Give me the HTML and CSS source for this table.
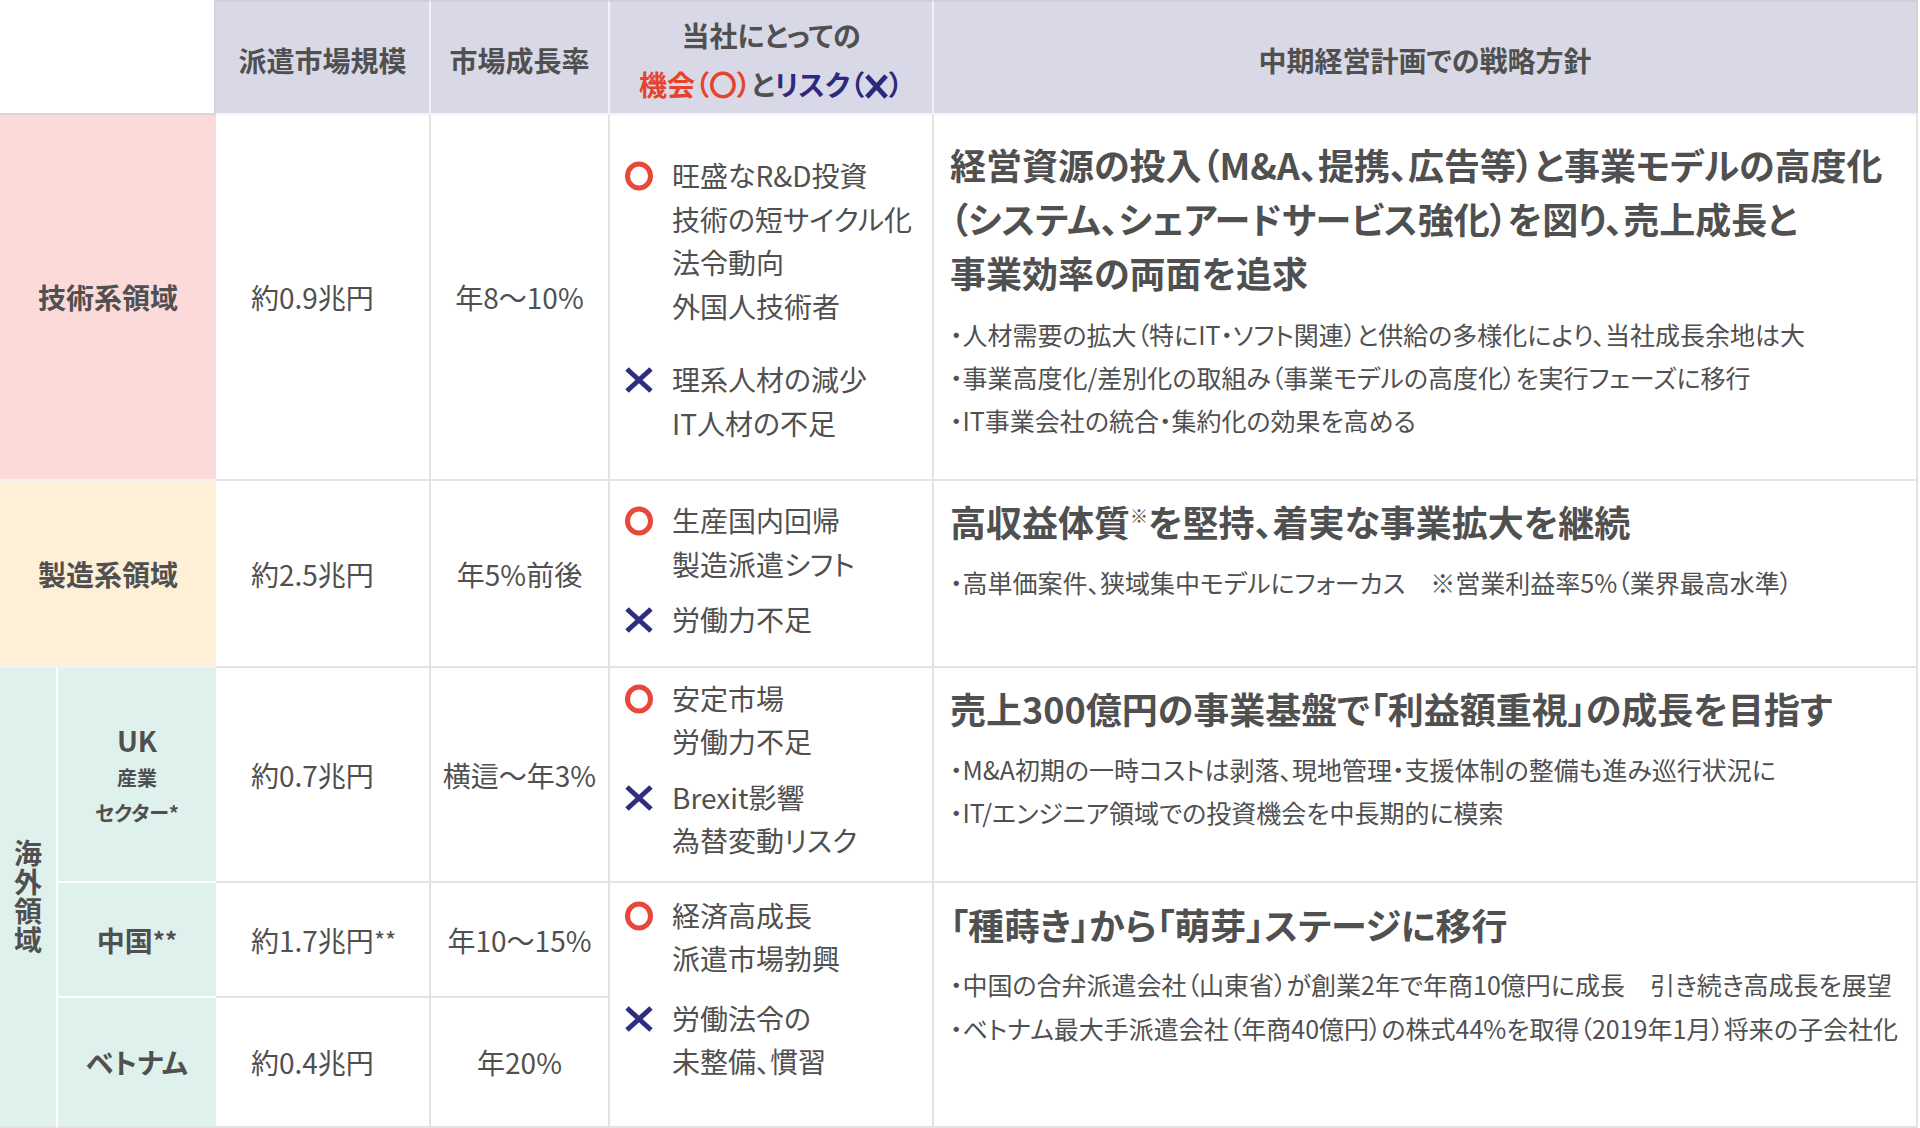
FILE: index.html
```html
<!DOCTYPE html>
<html lang="ja">
<head>
<meta charset="utf-8">
<title>派遣市場と中期経営計画での戦略方針</title>
<link rel="stylesheet" href="styles.css">
</head>
<body>
<main class="matrix">
  <div class="cell corner"></div>
  <div class="cell head">派遣市場規模</div>
  <div class="cell head">市場成長率</div>
  <div class="cell head head--risk">
    <p class="head-lines">当社にとっての<br><span class="c-opp">機会（〇）</span>と<span class="c-risk">リスク（<svg class="head-x" viewBox="0 0 26 26" width="25" height="25"><path d="M3 2 L23 24 M23 2 L3 24" stroke="#2b2a7f" stroke-width="5" fill="none"/></svg>）</span></p>
  </div>
  <div class="cell head head--last">中期経営計画での戦略方針</div>

  <!-- 技術系領域 -->
  <div class="cell label label--tech">技術系領域</div>
  <div class="cell size">約0.9兆円</div>
  <div class="cell growth">年8〜10%</div>
  <div class="cell ox ox--first">
    <div class="ox-list">
      <div class="ox-group">
        <svg class="mark mark--o" viewBox="0 0 32 30" width="32" height="30"><ellipse cx="16" cy="15" rx="11.5" ry="12" fill="none" stroke="#e8473a" stroke-width="5"/></svg>
        <p class="ox-text">旺盛なR&amp;D投資<br>技術の短サイクル化<br>法令動向<br>外国人技術者</p>
      </div>
      <div class="ox-group ox-group--wide">
        <svg class="mark mark--x" viewBox="0 0 32 26" width="32" height="26"><path d="M4 2 L28 24 M28 2 L4 24" stroke="#2e2d82" stroke-width="5" fill="none"/></svg>
        <p class="ox-text">理系人材の減少<br>IT人材の不足</p>
      </div>
    </div>
  </div>
  <div class="cell strategy strategy--first">
    <h2 class="strategy-title">経営資源の投入（M&amp;A、提携、広告等）と事業モデルの高度化<br>（システム、シェアードサービス強化）を図り、売上成長と<br>事業効率の両面を追求</h2>
    <ul class="strategy-points">
      <li>・人材需要の拡大（特にIT・ソフト関連）と供給の多様化により、当社成長余地は大</li>
      <li>・事業高度化/差別化の取組み（事業モデルの高度化）を実行フェーズに移行</li>
      <li>・IT事業会社の統合・集約化の効果を高める</li>
    </ul>
  </div>

  <!-- 製造系領域 -->
  <div class="cell label label--mfg">製造系領域</div>
  <div class="cell size">約2.5兆円</div>
  <div class="cell growth">年5%前後</div>
  <div class="cell ox ox--mfg">
    <div class="ox-list">
      <div class="ox-group">
        <svg class="mark mark--o" viewBox="0 0 32 30" width="32" height="30"><ellipse cx="16" cy="15" rx="11.5" ry="12" fill="none" stroke="#e8473a" stroke-width="5"/></svg>
        <p class="ox-text">生産国内回帰<br>製造派遣シフト</p>
      </div>
      <div class="ox-group">
        <svg class="mark mark--x" viewBox="0 0 32 26" width="32" height="26"><path d="M4 2 L28 24 M28 2 L4 24" stroke="#2e2d82" stroke-width="5" fill="none"/></svg>
        <p class="ox-text">労働力不足</p>
      </div>
    </div>
  </div>
  <div class="cell strategy">
    <h2 class="strategy-title">高収益体質<sup class="note">※</sup>を堅持、着実な事業拡大を継続</h2>
    <ul class="strategy-points">
      <li>・高単価案件、狭域集中モデルにフォーカス　※営業利益率5%（業界最高水準）</li>
    </ul>
  </div>

  <!-- 海外領域 -->
  <div class="cell label label--intl label--vertical">海外領域</div>
  <div class="cell label label--intl label--sub label--uk">
    <span class="uk-main">UK</span>
    <span class="uk-sub">産業</span>
    <span class="uk-sub">セクター*</span>
  </div>
  <div class="cell size">約0.7兆円</div>
  <div class="cell growth">横這〜年3%</div>
  <div class="cell ox ox--uk">
    <div class="ox-list">
      <div class="ox-group">
        <svg class="mark mark--o" viewBox="0 0 32 30" width="32" height="30"><ellipse cx="16" cy="15" rx="11.5" ry="12" fill="none" stroke="#e8473a" stroke-width="5"/></svg>
        <p class="ox-text">安定市場<br>労働力不足</p>
      </div>
      <div class="ox-group">
        <svg class="mark mark--x" viewBox="0 0 32 26" width="32" height="26"><path d="M4 2 L28 24 M28 2 L4 24" stroke="#2e2d82" stroke-width="5" fill="none"/></svg>
        <p class="ox-text">Brexit影響<br>為替変動リスク</p>
      </div>
    </div>
  </div>
  <div class="cell strategy">
    <h2 class="strategy-title">売上300億円の事業基盤で「利益額重視」の成長を目指す</h2>
    <ul class="strategy-points">
      <li>・M&amp;A初期の一時コストは剥落、現地管理・支援体制の整備も進み巡行状況に</li>
      <li>・IT/エンジニア領域での投資機会を中長期的に模索</li>
    </ul>
  </div>

  <div class="cell label label--intl label--sub">中国<span class="star">**</span></div>
  <div class="cell size">約1.7兆円<span class="star">**</span></div>
  <div class="cell growth">年10〜15%</div>
  <div class="cell ox ox--span">
    <div class="ox-list">
      <div class="ox-group">
        <svg class="mark mark--o" viewBox="0 0 32 30" width="32" height="30"><ellipse cx="16" cy="15" rx="11.5" ry="12" fill="none" stroke="#e8473a" stroke-width="5"/></svg>
        <p class="ox-text">経済高成長<br>派遣市場勃興</p>
      </div>
      <div class="ox-group ox-group--mid">
        <svg class="mark mark--x" viewBox="0 0 32 26" width="32" height="26"><path d="M4 2 L28 24 M28 2 L4 24" stroke="#2e2d82" stroke-width="5" fill="none"/></svg>
        <p class="ox-text">労働法令の<br>未整備、慣習</p>
      </div>
    </div>
  </div>
  <div class="cell strategy strategy--span">
    <h2 class="strategy-title">「種蒔き」から「萌芽」ステージに移行</h2>
    <ul class="strategy-points strategy-points--loose">
      <li>・中国の合弁派遣会社（山東省）が創業2年で年商10億円に成長　引き続き高成長を展望</li>
      <li>・ベトナム最大手派遣会社（年商40億円）の株式44%を取得（2019年1月）将来の子会社化</li>
    </ul>
  </div>

  <div class="cell label label--intl label--sub label--last">ベトナム</div>
  <div class="cell size">約0.4兆円</div>
  <div class="cell growth">年20%</div>
</main>
</body>
</html>
```

FILE: styles.css
```css
* {
  box-sizing: border-box;
  margin: 0;
  padding: 0;
}

body {
  margin: 0;
  background: #ffffff;
  color: #505050;
  font-family: "Noto Sans CJK JP", "Noto Sans", sans-serif;
  font-feature-settings: "palt";
}

.matrix {
  display: grid;
  width: 1918px;
  grid-template-columns: 58px 158px 215px 179px 324px 984px;
  grid-template-rows: 115px 366px 187px 215px 115px 130px;
}

.cell {
  display: flex;
  align-items: center;
  border-right: 2px solid #e3e3e3;
  border-bottom: 2px solid #e3e3e3;
  font-size: 28px;
}

/* header */
.corner {
  grid-column: span 2;
  border-right-color: #d6d6d6;
  border-bottom-color: #d6d6d6;
}

.head {
  justify-content: center;
  padding-top: 4px;
  background: #d8d8e7;
  border-top: 2px solid #cfcfd6;
  border-right-color: #f2f2f6;
  border-bottom-color: #f2f2f6;
  font-weight: 700;
  text-align: center;
}

.head--last {
  border-right-color: #d6d6d6;
}

.head-lines {
  line-height: 49px;
}

.c-opp {
  color: #e6432f;
}

.c-risk {
  color: #2b2a7f;
}

.head-x {
  display: inline-block;
  vertical-align: -3px;
}

/* row labels */
.label {
  justify-content: center;
  font-weight: 700;
  border-right: none;
  border-bottom-color: #f3f3f3;
}

.label--tech {
  grid-column: span 2;
  background: #fcdada;
}

.label--mfg {
  grid-column: span 2;
  background: #fef0d6;
}

.label--intl {
  background: #dff1ec;
}

.label--vertical {
  grid-row: span 3;
  border-right: 2px solid #ffffff;
  border-bottom-color: #e3e3e3;
  writing-mode: vertical-rl;
  text-orientation: upright;
  line-height: 1;
  letter-spacing: 1px;
}

.label--sub {
  border-bottom-color: #ffffff;
}

.label--last {
  border-bottom-color: #e3e3e3;
}

.label--uk {
  flex-direction: column;
}

.uk-main {
  font-size: 28px;
  line-height: 40px;
}

.uk-sub {
  font-size: 20px;
  line-height: 35px;
}

.star {
  font-size: 24px;
  vertical-align: 2px;
}

/* values */
.size {
  padding-left: 35px;
}

.growth {
  justify-content: center;
}

/* opportunities / risks */
.ox {
  padding-left: 13px;
}

.ox--first {
  padding-top: 5px;
}

.ox--mfg {
  padding-bottom: 6px;
}

.ox--uk {
  padding-bottom: 10px;
}

.ox--span {
  grid-row: span 2;
  padding-bottom: 32px;
}

.ox-group {
  display: flex;
  gap: 17px;
  align-items: flex-start;
}

.ox-group + .ox-group {
  margin-top: 12px;
}

.ox-group + .ox-group--wide {
  margin-top: 30px;
}

.ox-group + .ox-group--mid {
  margin-top: 16px;
}

.mark {
  flex: none;
  display: block;
}

.mark--o {
  margin-top: 7px;
}

.mark--x {
  margin-top: 9px;
}

.ox-text {
  font-size: 28px;
  line-height: 43.5px;
  white-space: nowrap;
}

/* strategy */
.strategy {
  display: block;
  padding: 13px 16px 0 16px;
}

.strategy--first {
  padding-top: 22px;
}

.strategy--span {
  grid-row: span 2;
  padding-top: 14px;
}

.strategy-title {
  font-size: 36px;
  font-weight: 700;
  line-height: 54px;
  white-space: nowrap;
}

.note {
  font-size: 18px;
  font-weight: 400;
  vertical-align: 14px;
  line-height: 0;
}

.strategy-points {
  list-style: none;
  margin-top: 13px;
  font-size: 25px;
  line-height: 43px;
  white-space: nowrap;
}

.strategy--first .strategy-points {
  margin-top: 14px;
}

.strategy-points--loose {
  margin-top: 11px;
  line-height: 44px;
}
```
